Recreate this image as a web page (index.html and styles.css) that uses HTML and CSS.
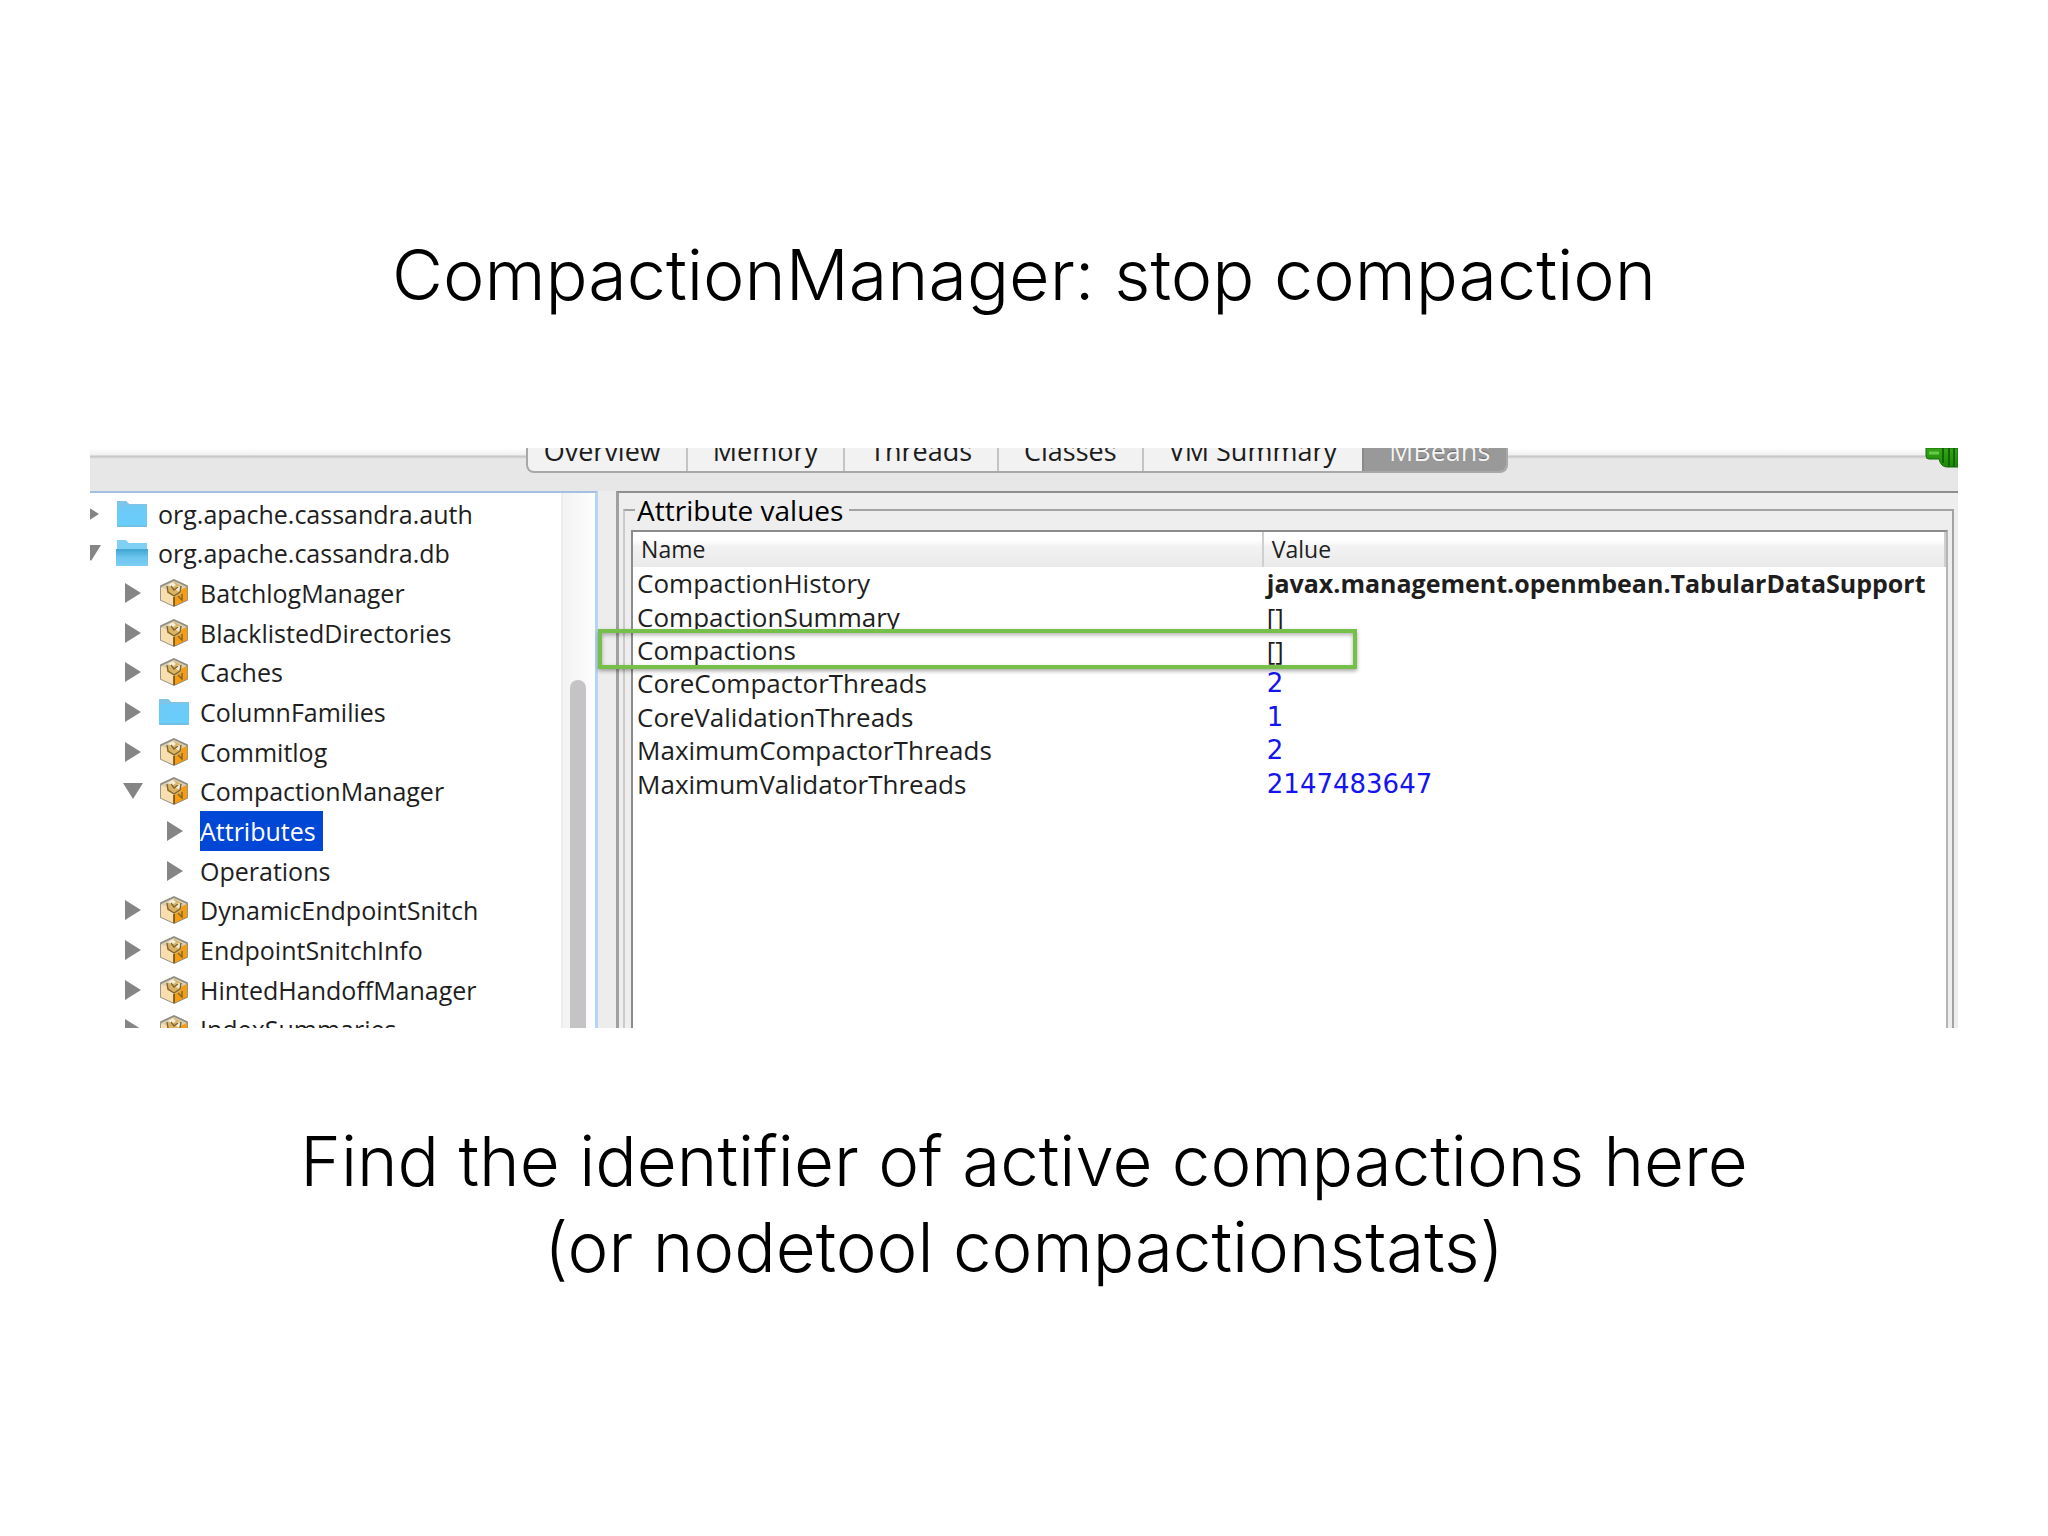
FILE: index.html
```html
<!DOCTYPE html>
<html lang="en">
<head>
    <meta charset="UTF-8">
    <meta name="viewport" content="width=device-width, initial-scale=1.0">
    <title>CompactionManager: stop compaction</title>
    <link rel="stylesheet" href="styles.css">
</head>
<body>
    <!-- icons shared by the tree rows -->
    <svg class="sprite" aria-hidden="true">
        <defs>
            <linearGradient id="blue" x1="0" y1="0" x2="0" y2="1">
                <stop offset="0" stop-color="#6fc9f5"/>
                <stop offset="1" stop-color="#68cdfc"/>
            </linearGradient>
            <linearGradient id="open-blue" x1="0" y1="0" x2="0" y2="1">
                <stop offset="0" stop-color="#3fa5d0"/>
                <stop offset="0.5" stop-color="#6cc5ee"/>
                <stop offset="1" stop-color="#7ccdf2"/>
            </linearGradient>
            <linearGradient id="plug-green" x1="0" y1="0" x2="0" y2="1">
                <stop offset="0" stop-color="#36a318"/>
                <stop offset="1" stop-color="#1c8a08"/>
            </linearGradient>
        </defs>
        <symbol id="folder" viewBox="0 0 32 28">
            <path d="M1 1h9l3 3h18v22q0 1-1 1H2q-1 0-1-1z" fill="url(#blue)"/>
            <path d="M1 1h9l3 3h18v2H1z" fill="#7cc4e8"/>
            <path d="M1 26h30" stroke="#7bb3d0" stroke-width="1"/>
        </symbol>
        <symbol id="folder-open" viewBox="0 0 32 28">
            <path d="M1 1h9l3 3h18v10H1z" fill="#7fd0f3"/>
            <path d="M0 10h32v16q0 1-1 1H1q-1 0-1-1z" fill="url(#open-blue)"/>
        </symbol>
        <symbol id="bean" viewBox="0 0 30 28">
            <path d="M15 1L28 7v14l-13 6L2 21V7z" fill="#d8cfb2" stroke="#8f8b80" stroke-width="1.8"/>
            <path d="M2 8l13 6v13L2 21z" fill="#f9dfb0"/>
            <path d="M28 8l-13 6v13l13-6z" fill="#f59c10"/>
            <path d="M8 8l7-5 7 4v8l-5 3-9-4z" fill="#dcb263"/>
            <path d="M9 6l5-3 3 3-4 3zM18 7l4 1-1 5-4-2z" fill="#f4edd8"/>
            <path d="M8 7l1 6 6 4 6-4 1-6M12 7l3 4 4-3M19 17l4 4v-6" fill="none" stroke="#7d6633" stroke-width="1.4"/>
            <path d="M15 18v9" stroke="#6b4a18" stroke-width="1.6"/>
        </symbol>
        <symbol id="closed" viewBox="0 0 16 20">
            <path d="M0 0l16 10L0 20z" fill="#858585"/>
        </symbol>
        <symbol id="opened" viewBox="0 0 20 16">
            <path d="M0 0h20L10 16z" fill="#858585"/>
        </symbol>
    </svg>

    <h1>CompactionManager: stop compaction</h1>

    <div class="console">
        <div class="toolbar">
            <div class="tabs">
                <button class="tab">Overview</button>
                <button class="tab">Memory</button>
                <button class="tab">Threads</button>
                <button class="tab">Classes</button>
                <button class="tab">VM Summary</button>
                <button class="tab active">MBeans</button>
            </div>
            <svg class="plug" viewBox="0 0 33 20">
                <path d="M1 0v8q0 3 3 3h10q2 8 8 8h11V0z" fill="url(#plug-green)" stroke="#176b0a"/>
                <path d="M4 5h10" stroke="#66c94c" stroke-width="3"/>
                <path d="M18 0v15M24 0v19M29 0v19" stroke="#126408" stroke-width="2"/>
            </svg>
        </div>

        <div class="panes">
            <div class="tree-pane">
                <ul class="tree">
                    <li><svg class="arrow"><use href="#closed"/></svg><svg class="icon"><use href="#folder"/></svg><span>org.apache.cassandra.auth</span></li>
                    <li><svg class="arrow down"><use href="#opened"/></svg><svg class="icon"><use href="#folder-open"/></svg><span>org.apache.cassandra.db</span></li>
                    <li class="child"><svg class="arrow"><use href="#closed"/></svg><svg class="icon"><use href="#bean"/></svg><span>BatchlogManager</span></li>
                    <li class="child"><svg class="arrow"><use href="#closed"/></svg><svg class="icon"><use href="#bean"/></svg><span>BlacklistedDirectories</span></li>
                    <li class="child"><svg class="arrow"><use href="#closed"/></svg><svg class="icon"><use href="#bean"/></svg><span>Caches</span></li>
                    <li class="child"><svg class="arrow"><use href="#closed"/></svg><svg class="icon"><use href="#folder"/></svg><span>ColumnFamilies</span></li>
                    <li class="child"><svg class="arrow"><use href="#closed"/></svg><svg class="icon"><use href="#bean"/></svg><span>Commitlog</span></li>
                    <li class="child"><svg class="arrow down"><use href="#opened"/></svg><svg class="icon"><use href="#bean"/></svg><span>CompactionManager</span></li>
                    <li class="leaf"><svg class="arrow"><use href="#closed"/></svg><span class="selected">Attributes</span></li>
                    <li class="leaf"><svg class="arrow"><use href="#closed"/></svg><span>Operations</span></li>
                    <li class="child"><svg class="arrow"><use href="#closed"/></svg><svg class="icon"><use href="#bean"/></svg><span>DynamicEndpointSnitch</span></li>
                    <li class="child"><svg class="arrow"><use href="#closed"/></svg><svg class="icon"><use href="#bean"/></svg><span>EndpointSnitchInfo</span></li>
                    <li class="child"><svg class="arrow"><use href="#closed"/></svg><svg class="icon"><use href="#bean"/></svg><span>HintedHandoffManager</span></li>
                    <li class="child"><svg class="arrow"><use href="#closed"/></svg><svg class="icon"><use href="#bean"/></svg><span>IndexSummaries</span></li>
                </ul>
                <div class="scrollbar"><div class="thumb"></div></div>
            </div>

            <div class="divider"><span class="knob"></span></div>

            <div class="detail">
                <fieldset>
                    <legend>Attribute values</legend>
                    <div class="table-box">
                        <table>
                            <thead>
                                <tr><th>Name</th><th>Value</th></tr>
                            </thead>
                            <tbody>
                                <tr><td>CompactionHistory</td><td class="strong">javax.management.openmbean.TabularDataSupport</td></tr>
                                <tr><td>CompactionSummary</td><td>[]</td></tr>
                                <tr><td>Compactions</td><td>[]</td></tr>
                                <tr><td>CoreCompactorThreads</td><td class="number">2</td></tr>
                                <tr><td>CoreValidationThreads</td><td class="number">1</td></tr>
                                <tr><td>MaximumCompactorThreads</td><td class="number">2</td></tr>
                                <tr><td>MaximumValidatorThreads</td><td class="number">2147483647</td></tr>
                            </tbody>
                        </table>
                    </div>
                </fieldset>
            </div>
        </div>

        <div class="highlight"></div>
    </div>

    <p class="caption">Find the identifier of active compactions here<br>(or nodetool compactionstats)</p>
</body>
</html>
```
FILE: styles.css
```css
* {
    box-sizing: border-box;
}
body {
    margin: 0;
    padding: 0 90px;
    background-color: white;
    color: black;
    font-family: "Open Sans", "Noto Sans", sans-serif;
}
.sprite {
    position: absolute;
    width: 0;
    height: 0;
}
h1,
.caption {
    margin: 0;
    font-family: Inter, "Liberation Sans", sans-serif;
    font-size: 70px;
    font-weight: 300;
    line-height: 86px;
    text-align: center;
}
h1 {
    padding: 232px 0 130px;
}
.caption {
    padding-top: 90px;
    font-size: 69px;
}

/* console window */
.console {
    position: relative;
    height: 580px;
    overflow: hidden;
    background-color: #e7e7e7;
    font-size: 25px;
}
.toolbar {
    display: flex;
    justify-content: center;
    height: 43px;
    padding-right: 14px;
    background: linear-gradient(#ffffff, #f0f0f0 7px, #c4c4c4 8px, #cccccc 9px, #e7e7e7 11px);
}
.tabs {
    display: flex;
    height: 25px;
    border: 2px solid #a8a8a8;
    border-top: none;
    border-radius: 0 0 8px 8px;
    background-color: #f2f2f2;
    overflow: hidden;
}
.tab {
    display: flex;
    align-items: flex-end;
    height: 23px;
    padding: 0 25px;
    border: none;
    background: none;
    color: #1c1c1c;
    font: 27px/40px "Open Sans", "Noto Sans", sans-serif;
}
.tab:first-child {
    padding-left: 16px;
}
.tab:last-child {
    padding-right: 16px;
}
.tab + .tab {
    border-left: 2px solid #c4c4c4;
}
.tab.active {
    border-left-color: #8a8a8a;
    background-color: #999999;
    color: #f4f4f4;
    text-shadow: 0 -1px 1px #666666;
}
.plug {
    position: absolute;
    top: 0;
    right: 0;
    width: 33px;
    height: 20px;
}
.panes {
    display: grid;
    grid-template-columns: 27.2% 18px 1fr;
    height: 537px;
}

/* MBean tree */
.tree-pane {
    display: flex;
    min-width: 0;
    border-top: 2px solid #a3bfe2;
    border-right: 3px solid #b5d5f2;
    background-color: white;
    overflow: hidden;
}
.tree {
    flex: 1;
    display: grid;
    grid-auto-rows: minmax(0, 1fr);
    height: 555px;
    margin: 1px 0 0;
    padding: 0;
    list-style: none;
}
.tree li {
    display: flex;
    align-items: center;
    color: #1e1e1e;
    white-space: nowrap;
}
.tree li.child {
    padding-left: 42px;
}
.tree li.leaf {
    padding-left: 84px;
}
.arrow {
    width: 16px;
    height: 20px;
    margin: 0 17px 0 -7px;
}
.arrow.down {
    width: 20px;
    height: 16px;
    margin: 0 15px 0 -9px;
}
.icon {
    width: 32px;
    height: 28px;
    margin-right: 10px;
}
.tree span {
    line-height: 40px;
}
.tree .selected {
    padding-right: 7px;
    background-color: #0047d6;
    color: white;
}
.scrollbar {
    width: 34px;
    padding: 187px 9px 0 7px;
    border-left: 2px solid #ececec;
    background: linear-gradient(90deg, #f3f3f3, #fdfdfd);
}
.thumb {
    height: 100%;
    border-radius: 8px 8px 0 0;
    background-color: #c5c3c6;
}
.divider {
    display: flex;
    align-items: flex-end;
    justify-content: center;
    background-color: #ededed;
}
.knob {
    width: 12px;
    height: 12px;
    border: 2px solid #c9c9c9;
    border-right-color: #f4f4f4;
    border-bottom-color: #f4f4f4;
    border-radius: 50%;
    background-color: white;
}

/* attribute table */
.detail {
    min-width: 0;
    padding-right: 4px;
    padding-left: 4px;
    border-top: 2px solid #8f8f8f;
    border-left: 3px solid #a0a0a0;
    background-color: #eeeeee;
}
fieldset {
    min-width: 0;
    height: 560px;
    margin: 0;
    padding: 3px 4px 0 6px;
    border: 2px solid #a3a3a3;
    border-left-color: #cacaca;
}
legend {
    margin-left: 4px;
    padding: 0 6px 0 2px;
    font-size: 28px;
    line-height: 34px;
}
.table-box {
    height: 520px;
    border: 2px solid #8c8c8c;
    border-right-color: #b5b5b5;
    background-color: white;
}
table {
    width: 100%;
    height: 269px;
    border-collapse: collapse;
    table-layout: fixed;
    color: #1e1e1e;
}
th {
    height: 35px;
    padding: 0 8px;
    background: linear-gradient(#ffffff 8px, #f3f3f3 14px, #e9e9e9);
    border-right: 2px solid #cfcfcf;
    font-size: 23px;
    font-weight: 400;
    line-height: 35px;
    text-align: left;
}
th:first-child {
    width: 48%;
}
td {
    padding: 0 4px;
    font-size: 26px;
    line-height: 33px;
    white-space: nowrap;
}
.strong {
    font-size: 25px;
    font-weight: 700;
}
.number {
    color: #1414f0;
    font-family: "DejaVu Sans", sans-serif;
}

.highlight {
    position: absolute;
    top: 181px;
    left: 27.2%;
    width: 40.6%;
    height: 40px;
    border: 4px solid #76c04a;
    box-shadow: 0 2px 4px rgba(0, 0, 0, 0.35), inset 0 2px 4px rgba(0, 0, 0, 0.3);
}
```
